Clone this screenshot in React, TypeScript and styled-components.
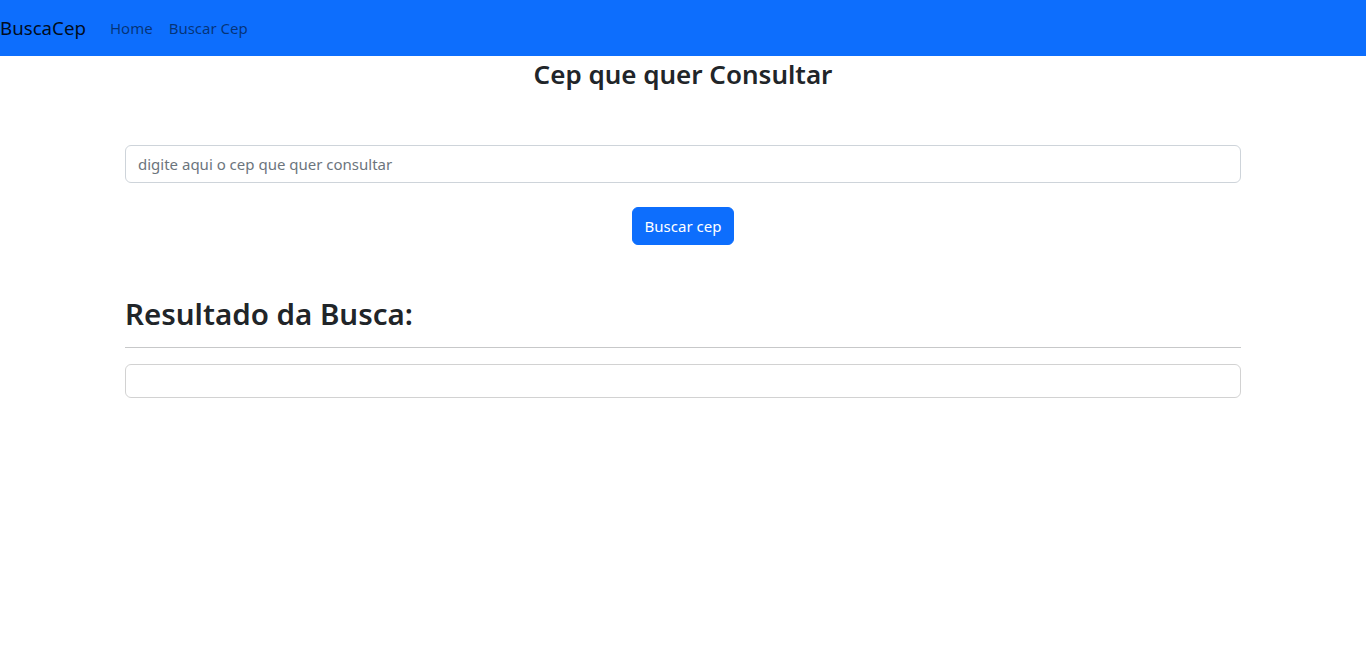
import React from "react";
import styled, { createGlobalStyle } from "styled-components";

const Global = createGlobalStyle`
  * { box-sizing: border-box; }
  body {
    margin: 0;
    font-family: "Noto Sans", "Open Sans", sans-serif;
    font-size: 15px;
    line-height: 1.5;
    color: #212529;
    background: #fff;
  }
`;

const NavBar = styled.nav`
  height: 56px;
  background: #0d6efd;
  display: flex;
  align-items: center;
`;

const Brand = styled.a`
  font-size: 18.7px;
  line-height: 30px;
  color: rgba(0, 0, 0, 0.9);
  text-decoration: none;
  margin-right: 16px;
`;

const NavLinks = styled.div`
  display: flex;
`;

const NavLink = styled.a`
  padding: 8px;
  line-height: 24px;
  color: rgba(0, 0, 0, 0.55);
  text-decoration: none;
  font-size: 15px;
`;

const Container = styled.main`
  width: 1140px;
  margin: 0 auto;
  padding: 0 12px;
  display: flex;
  flex-direction: column;
`;

const Title = styled.h3`
  margin: 4px 0 0;
  font-size: 26px;
  font-weight: 600;
  line-height: 29px;
  text-align: center;
`;

const Input = styled.input`
  margin-top: 56px;
  height: 38px;
  width: 100%;
  padding: 6px 12px;
  font-family: inherit;
  font-size: 15px;
  color: #212529;
  border: 1px solid #ced4da;
  border-radius: 6px;
  outline: none;
  &::placeholder { color: #6c757d; }
`;

const Button = styled.button`
  align-self: center;
  margin-top: 24px;
  height: 38px;
  padding: 6px 12px;
  font-family: inherit;
  font-size: 15px;
  line-height: 24px;
  color: #fff;
  background: #0d6efd;
  border: 1px solid #0d6efd;
  border-radius: 6px;
  cursor: pointer;
`;

const ResultTitle = styled.h2`
  margin: 50px 0 0;
  font-size: 29.5px;
  font-weight: 600;
  line-height: 38px;
`;

const Rule = styled.hr`
  margin: 14px 0 0;
  border: 0;
  border-top: 1px solid rgba(33, 37, 41, 0.25);
`;

const Card = styled.div`
  margin-top: 16px;
  border: 1px solid rgba(0, 0, 0, 0.175);
  border-radius: 6px;
`;

const CardBody = styled.div`
  padding: 16px;
`;

export default function App() {
  return (
    <>
      <Global />
      <NavBar>
        <Brand href="#">BuscaCep</Brand>
        <NavLinks>
          <NavLink href="#">Home</NavLink>
          <NavLink href="#">Buscar Cep</NavLink>
        </NavLinks>
      </NavBar>
      <Container>
        <Title>Cep que quer Consultar</Title>
        <Input placeholder="digite aqui o cep que quer consultar" />
        <Button>Buscar cep</Button>
        <ResultTitle>Resultado da Busca:</ResultTitle>
        <Rule />
        <Card>
          <CardBody />
        </Card>
      </Container>
    </>
  );
}
